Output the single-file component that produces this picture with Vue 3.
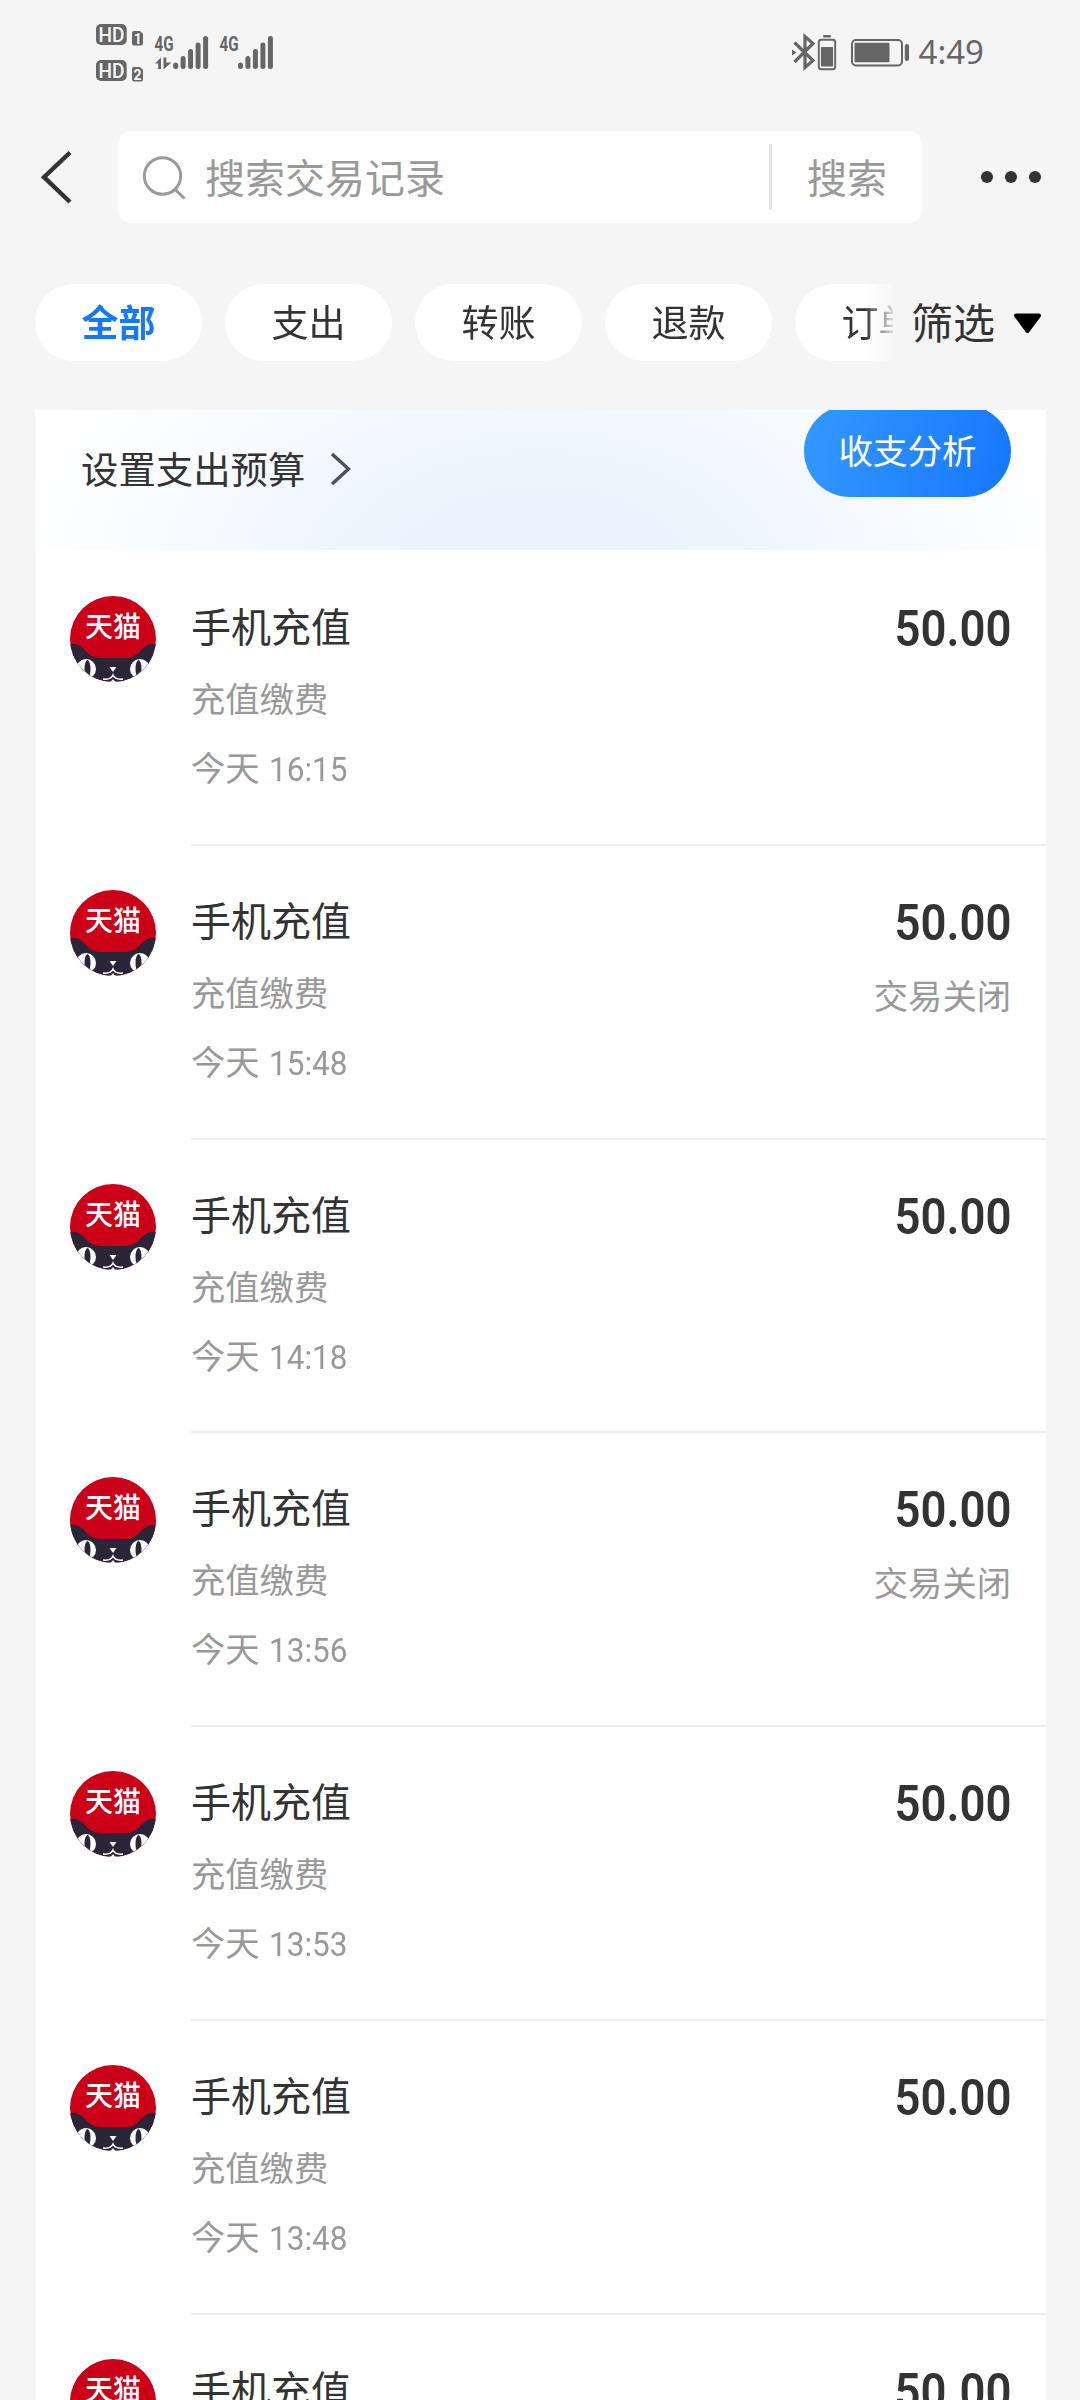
<script setup>
const tabs = ['全部', '支出', '转账', '退款', '订单']
const records = [
  { time: '16:15', closed: false },
  { time: '15:48', closed: true },
  { time: '14:18', closed: false },
  { time: '13:56', closed: true },
  { time: '13:53', closed: false },
  { time: '13:48', closed: false },
  { time: '13:47', closed: false }
]
const bars = [
  { x: 0, h: 6.5 },
  { x: 7.4, h: 13 },
  { x: 14.9, h: 20 },
  { x: 22.4, h: 26.5 },
  { x: 29.9, h: 33 }
]
</script>

<template>
  <div class="screen">
    <header class="status">
      <svg class="signals" width="190" height="70" viewBox="90 15 190 70">
        <g fill="#666">
          <rect x="96" y="24" width="30.7" height="21" rx="5" />
          <rect x="96" y="60" width="30.7" height="21" rx="5" />
          <path d="M134 31h6l3 3v9.500a2 2 0 0 1-2 2h-7a2 2 0 0 1-2-2v-10.500a2 2 0 0 1 2-2z" />
          <path d="M134 67h6l3 3v9.500a2 2 0 0 1-2 2h-7a2 2 0 0 1-2-2v-10.500a2 2 0 0 1 2-2z" />
          <path d="M155 63.500l6-6v11.500h-2.800v-5.500zM163.500 57.500h2.800v5h5l-7.800 7z" />
          <rect v-for="b in bars" :key="'a' + b.x" :x="173.200 + b.x" :y="69 - b.h" width="5" :height="b.h" rx="2.500" />
          <rect v-for="b in bars" :key="'b' + b.x" :x="238 + b.x" :y="69 - b.h" width="5" :height="b.h" rx="2.500" />
        </g>
        <g class="hd">
          <text x="98.500" y="41.500" textLength="26" lengthAdjust="spacingAndGlyphs">HD</text>
          <text x="98.500" y="77.500" textLength="26" lengthAdjust="spacingAndGlyphs">HD</text>
        </g>
        <g class="sim">
          <text x="133.800" y="43.500">1</text>
          <text x="133.500" y="79.500">2</text>
        </g>
        <g class="net">
          <text x="154.500" y="51" textLength="19" lengthAdjust="spacingAndGlyphs">4G</text>
          <text x="219.500" y="51" textLength="19" lengthAdjust="spacingAndGlyphs">4G</text>
        </g>
      </svg>
      <div class="status-right">
        <svg width="120" height="40" viewBox="791 32 120 40">
          <g fill="none" stroke="#666" stroke-width="2.600">
            <path d="M794.500 42.500l18.500 18-8 7v-31l8 7-18.500 18.500" stroke-width="3.200" />
            <rect x="818.800" y="39.800" width="16.400" height="29.400" rx="2.500" stroke-width="1.900" />
            <rect x="852" y="40" width="50" height="25.500" rx="4" stroke-width="2" />
          </g>
          <g fill="#666">
            <path d="M792 49.500l4.500 3-4.500 3z" />
            <rect x="823" y="35" width="8" height="2.400" rx="1" />
            <rect x="820.900" y="47" width="12.200" height="19.500" rx="1" />
            <rect x="854.500" y="42.800" width="35" height="19.500" rx="1" />
            <rect x="904.800" y="44" width="4.200" height="17" rx="2" />
          </g>
        </svg>
        <span class="clock">4:49</span>
      </div>
    </header>

    <nav class="topbar">
      <svg class="back" width="34" height="56" viewBox="40 149 34 56">
        <path d="M70 152.500L44 177.200L70 202" fill="none" stroke="#333" stroke-width="4.400" />
      </svg>
      <div class="search">
        <svg width="46" height="46" viewBox="141 153 46 46" fill="none" stroke="#999">
          <circle cx="162.500" cy="175" r="18.200" stroke-width="2.900" />
          <path d="M174.500 188L184.500 197.500" stroke-width="3" />
        </svg>
        <span class="placeholder">搜索交易记录</span>
        <i class="sep"></i>
        <span class="go">搜索</span>
      </div>
      <div class="more"><i></i><i></i><i></i></div>
    </nav>

    <div class="filters">
      <div class="tabs">
        <span v-for="(t, i) in tabs" :key="t" class="tab" :class="{ active: i === 0 }">{{ t }}</span>
      </div>
      <div class="filter">
        <span>筛选</span>
        <svg width="30" height="22" viewBox="0 0 30 22">
          <path d="M3 3.500H26L14.500 19z" stroke="#000" stroke-width="4" stroke-linejoin="round" />
        </svg>
      </div>
    </div>

    <main class="card">
      <section class="banner">
        <span class="budget">设置支出预算</span>
        <svg class="arrow" width="22" height="36" viewBox="0 0 22 36">
          <path d="M2 3L18.500 18L2 33" fill="none" stroke="#4a4f5a" stroke-width="3.400" />
        </svg>
        <button class="analysis">收支分析</button>
      </section>

      <ul class="list">
        <li v-for="r in records" :key="r.time" class="row">
          <svg class="logo" width="86" height="86" viewBox="0 0 86 86">
            <defs><clipPath id="disc"><circle cx="43" cy="43" r="43" /></clipPath></defs>
            <g clip-path="url(#disc)">
              <rect width="86" height="86" fill="#cb0018" />
              <path d="M0 48Q8 47 14 53Q21 62 30 62H56Q65 62 72 53Q78 47 86 48V86H0z" fill="#2a2638" />
              <ellipse cx="16" cy="73" rx="10" ry="10" fill="#fff" />
              <ellipse cx="70" cy="73" rx="10" ry="10" fill="#fff" />
              <ellipse cx="17.500" cy="73" rx="3" ry="9" fill="#2a2638" />
              <ellipse cx="68.500" cy="73" rx="3" ry="9" fill="#2a2638" />
              <path d="M39.500 71h7l-3.500 5z" fill="#fff" />
              <path d="M33 83q8 1 10-4q2 5 10 4" fill="none" stroke="#fff" stroke-width="1.500" />
              <path d="M36 86q6 0 7-3q1 3 7 3z" fill="#fff" />
            </g>
            <text x="43" y="40.500" text-anchor="middle">天猫</text>
          </svg>
          <div class="body">
            <div class="info">
              <span class="title">手机充值</span>
              <span class="sub">充值缴费</span>
              <span class="time">今天 <b>{{ r.time }}</b></span>
            </div>
            <div class="money">
              <span class="amount">50.00</span>
              <span v-if="r.closed" class="state">交易关闭</span>
            </div>
          </div>
        </li>
      </ul>
    </main>
  </div>
</template>

<style>
html, body { margin: 0; background: #f5f5f5; }
</style>

<style scoped>
.screen {
  width: 1080px;
  height: 2400px;
  overflow: hidden;
  display: flex;
  flex-direction: column;
  background: #f5f5f5;
  color: #333;
  font-family: "Noto Sans CJK SC", sans-serif;
}
.status {
  height: 131px;
  flex: none;
  display: flex;
  justify-content: space-between;
  align-items: flex-start;
  padding: 0 96px 0 90px;
  box-sizing: border-box;
}
.signals { margin-top: 15px; }
.hd text { font: 500 21px "Roboto", sans-serif; fill: #f5f5f5; }
.sim text { font: 700 14px "Roboto", sans-serif; fill: #f5f5f5; }
.net text { font: 700 21px "Roboto", sans-serif; fill: #666; }
.status-right { display: flex; align-items: center; margin-top: 32px; height: 40px; }
.clock { margin-left: 8px; font: 400 33px/42px "Noto Sans", sans-serif; color: #666; }
.topbar { height: 92px; flex: none; display: flex; align-items: center; padding-left: 40px; }
.back { margin-right: 44px; }
.search {
  width: 804px;
  height: 92px;
  box-sizing: border-box;
  padding-left: 23px;
  display: flex;
  align-items: center;
  background: #fff;
  border-radius: 13px;
  font-size: 40px;
  line-height: 60px;
  color: #999;
}
.placeholder { margin: 0 0 3px 18px; flex: 1; }
.sep { width: 3px; height: 66px; background: #e5e5e5; margin-right: 35px; }
.go { margin: 0 35px 2px 0; }
.more { display: flex; gap: 12px; margin-left: 59px; }
.more i { width: 12px; height: 12px; border-radius: 50%; background: #333; }
.filters { display: flex; flex: none; height: 77px; margin-top: 61px; padding-left: 35px; }
.tabs {
  width: 858px;
  flex: none;
  overflow: hidden;
  display: flex;
  gap: 23px;
  -webkit-mask-image: linear-gradient(90deg, #000 830px, transparent 862px);
  mask-image: linear-gradient(90deg, #000 830px, transparent 862px);
}
.tab {
  flex: none;
  width: 167px;
  height: 77px;
  border-radius: 39px;
  background: #fff;
  font-size: 37px;
  line-height: 75px;
  text-align: center;
}
.tab.active { color: #1677ff; font-weight: 700; }
.filter { display: flex; align-items: center; gap: 18px; margin-left: 18px; font-size: 42px; line-height: 74px; }
.filter span { margin-bottom: 3px; }
.card { width: 1011px; flex: 1; margin: 49px 0 0 35px; background: #fff; overflow: hidden; }
.banner {
  height: 140px;
  display: flex;
  align-items: flex-start;
  background: radial-gradient(ellipse 540px 340px at 50% 125%, #e8f2fe 0%, #ecf5fe 35%, #f6faff 65%, #fff 100%);
}
.budget { margin: 31px 0 0 46px; font-size: 37.400px; line-height: 54px; }
.arrow { margin: 41px 0 0 25px; }
.analysis {
  margin: -5px 35px 0 auto;
  width: 207px;
  height: 92px;
  padding: 0 0 3px;
  border: 0;
  border-radius: 46px;
  background: linear-gradient(100deg, #3399ff, #1677ff);
  color: #fff;
  font: 400 34.500px/89px "Noto Sans CJK SC", sans-serif;
}
.list { list-style: none; margin: 0; padding: 2px 0 0; }
.row { display: flex; height: 293.800px; padding-left: 35px; }
.logo { margin-top: 44px; flex: none; }
.logo text { font: 500 28px "Noto Sans CJK SC", sans-serif; fill: #fff; }
.body {
  margin-left: 35px;
  flex: 1;
  display: flex;
  justify-content: space-between;
  border-bottom: 2px solid #eee;
  padding-right: 35px;
}
.info, .money { display: flex; flex-direction: column; }
.title { margin-top: 43px; font-size: 40px; line-height: 60px; }
.sub { margin-top: 16px; font-size: 34.300px; line-height: 52px; color: #999; }
.time { margin-top: 17px; font-size: 34.300px; line-height: 52px; color: #999; }
.time b { font: 400 33.500px "Roboto", sans-serif; display: inline-block; margin-left: 2px; transform: scaleX(0.94); transform-origin: left; }
.money { align-items: flex-end; }
.amount { margin-top: 47px; font: 600 50px/60px "Roboto", sans-serif; transform: scaleX(0.91); transform-origin: right; }
.state { margin-top: 15px; font-size: 34.300px; line-height: 52px; color: #999; }
</style>
